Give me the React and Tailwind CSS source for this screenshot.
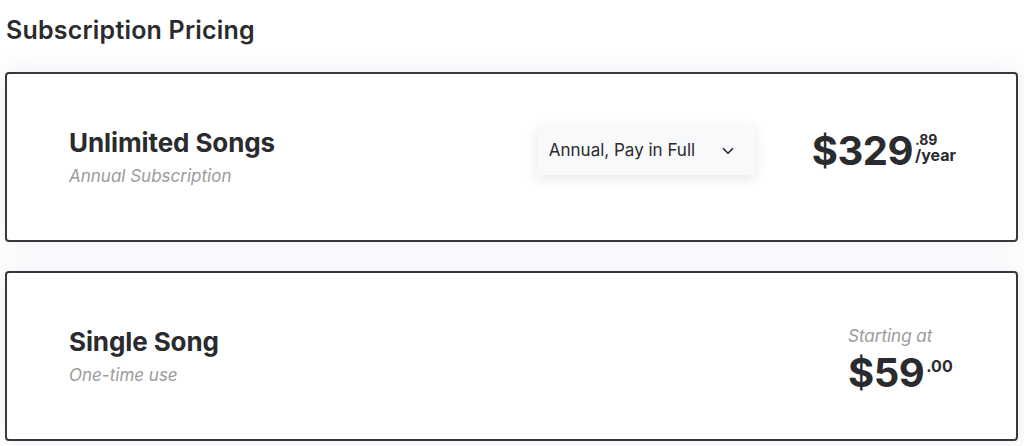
import { ChevronDown } from 'lucide-react';

const FONT = { fontFamily: '"Inter", "Open Sans", sans-serif' };

function PlanCard({ title, subtitle, children }) {
  return (
    <div className="flex items-center justify-between h-[170px] bg-white border-2 border-[#36383b] rounded-[4px] shadow-[0_0_24px_rgba(120,140,180,0.16)] pl-[62px] pr-[60px]">
      <div>
        <h2 className="text-[26px] font-bold text-[#2a2b2e] leading-[30px] tracking-[-0.1px]">{title}</h2>
        <p className="text-[17px] italic text-[#9b9b9b] mt-[7px] leading-[22px]">{subtitle}</p>
      </div>
      {children}
    </div>
  );
}

export default function App() {
  return (
    <div className="bg-white min-h-screen pl-[5px] pr-[6px] pt-[14px]" style={FONT}>
      <h1 className="text-[25px] font-semibold text-[#2a2b2e] leading-[32px] pl-px tracking-[0.2px]">Subscription Pricing</h1>

      <div className="mt-[26px] flex flex-col gap-[29px]">
        {/* annual plan with billing selector */}
        <PlanCard title="Unlimited Songs" subtitle="Annual Subscription">
          <div className="flex items-center mb-[12px]">
            <button className="flex items-center h-[48px] w-[218px] pl-[12px] pr-[18px] justify-between bg-[#f8f9fb] shadow-[0_3px_12px_rgba(40,50,80,0.12)] text-[17px] text-[#2a2b2e]">
              <span>Annual, Pay in Full</span>
              <ChevronDown className="w-[18px] h-[18px]" strokeWidth={2.25} />
            </button>
            <div className="ml-[57px] flex items-start text-[#2a2b2e]">
              <span className="text-[40px] font-bold leading-none tracking-[-0.5px]">$329</span>
              <span className="flex flex-col mt-[2px] ml-[2px]">
                <span className="text-[14px] font-bold leading-[14px]">.89</span>
                <span className="text-[16px] font-bold leading-[16px]">/year</span>
              </span>
            </div>
          </div>
        </PlanCard>

        {/* one-off purchase */}
        <PlanCard title="Single Song" subtitle="One-time use">
          <div className="flex flex-col mr-[2px] mt-[6px] w-[106px]">
            <span className="text-[17px] italic text-[#9b9b9b] leading-[22px]">Starting at</span>
            <div className="flex items-start text-[#2a2b2e] mt-[6px]">
              <span className="text-[40px] font-bold leading-none tracking-[-0.5px]">$59</span>
              <span className="text-[16px] font-bold leading-none mt-[5px] ml-[2px]">.00</span>
            </div>
          </div>
        </PlanCard>
      </div>
    </div>
  );
}
